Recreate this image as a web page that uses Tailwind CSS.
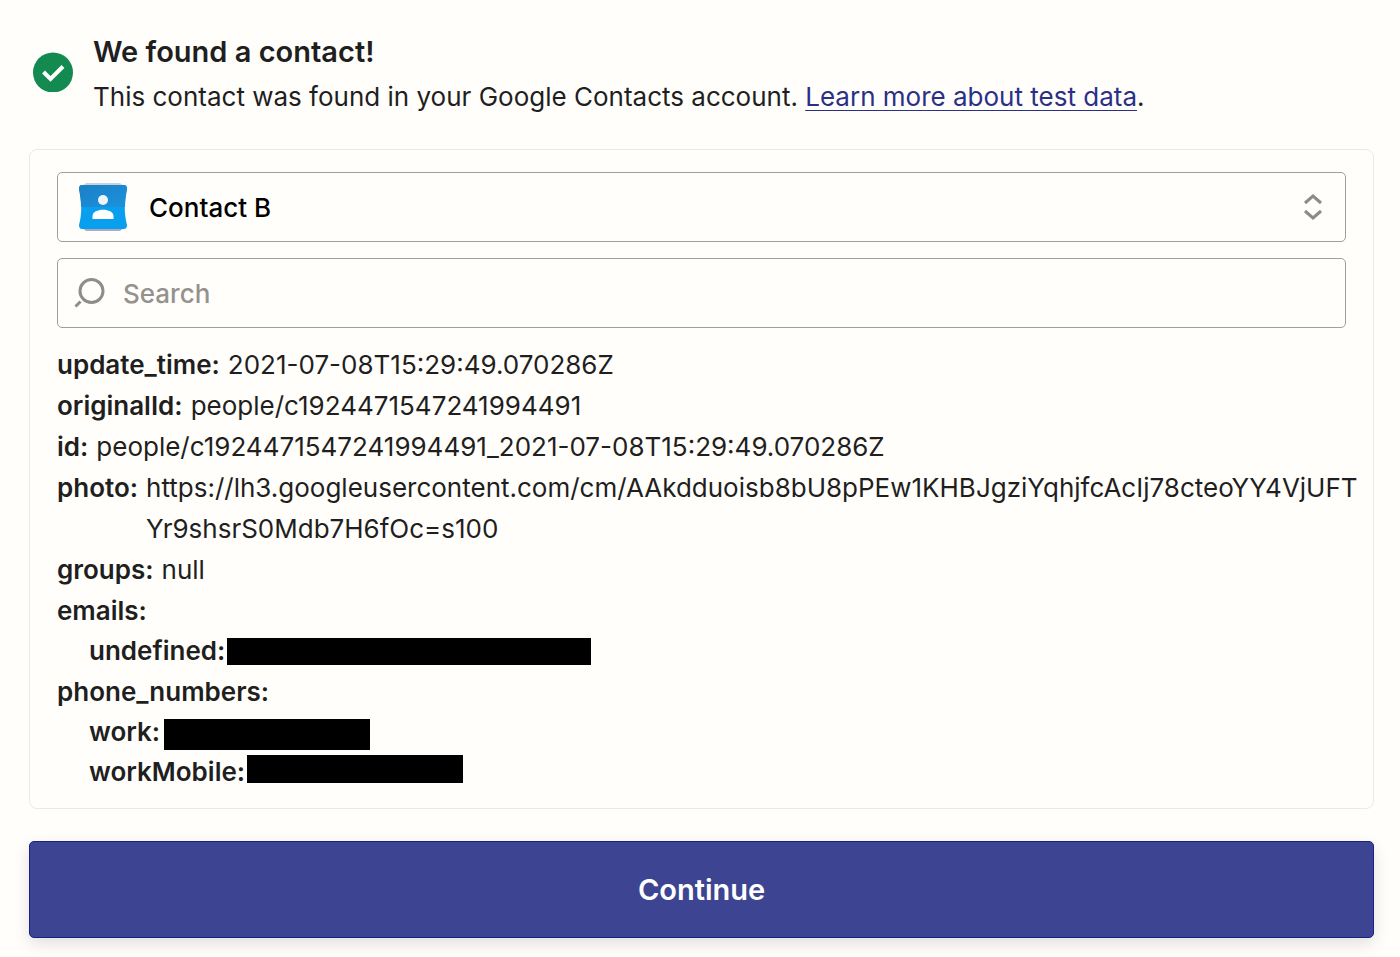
<!DOCTYPE html>
<html lang="en">
  <head>
    <meta charset="UTF-8" />
    <meta name="viewport" content="width=device-width, initial-scale=1.0" />
    <title>Test contact</title>
    <script src="https://cdn.jsdelivr.net/npm/@tailwindcss/browser@4"></script>
  </head>
  <body
    class="bg-[#fffefb] pt-8 pr-[26px] pb-[18px] pl-[29px] font-[Inter,sans-serif] text-[26px] leading-[41px] text-[#1f1f1f]"
  >
    <header class="flex items-start gap-5 pl-1">
      <svg class="mt-5 size-10 shrink-0" viewBox="0 0 40 40" fill="none">
        <circle cx="20" cy="20.500" r="20" fill="#138a50" />
        <path d="M10.500 20l7 7L30 14.500" stroke="#fff" stroke-width="4" />
      </svg>
      <div>
        <h1 class="text-[29px] leading-10 font-semibold">
          We found a contact!
        </h1>
        <p class="mt-1">
          This contact was found in your Google Contacts account.
          <a
            href="#"
            class="text-[#2b3087] underline decoration-1 underline-offset-4"
            >Learn more about test data</a
          >.
        </p>
      </div>
    </header>

    <main>
      <section
        class="mt-8 rounded-lg border border-[#eceae6] px-[27px] pt-[22px] pb-4"
      >
        <div class="relative">
          <select
            id="contact"
            aria-label="Contact"
            class="h-[70px] w-full appearance-none rounded-[5px] border border-[#a09f9b] bg-transparent pl-[91px] font-medium text-black"
          >
            <option>Contact B</option>
          </select>
          <svg
            class="pointer-events-none absolute top-[11px] left-[21px] size-[50px]"
            viewBox="0 0 50 50"
          >
            <defs>
              <linearGradient id="top" x1="0" y1="0" x2="1" y2="1">
                <stop offset="0" stop-color="#1a80c6" />
                <stop offset="1" stop-color="#1b92dc" />
              </linearGradient>
            </defs>
            <path d="M8 0h34l5 4H3z" fill="#c5d3df" />
            <path d="M3 44h44l-5 4H8z" fill="#a9adc4" />
            <path
              d="M4 2h42q3 0 3 4c-3 12-3 25 0 36q0 4-3 4H4q-3 0-3-4c3-11 3-24 0-36q0-4 3-4z"
              fill="#08a0ee"
            />
            <path
              d="M4 2h42q3 0 3 4c-1 6-2 12-2 18H3c0-6-1-12-2-18q0-4 3-4z"
              fill="url(#top)"
            />
            <circle cx="25" cy="17" r="5" fill="#eff4f8" />
            <path d="M14.500 36v-3c0-8.500 21-8.500 21 0v3z" fill="#fff" />
          </svg>
          <svg
            class="pointer-events-none absolute top-[21px] right-[23px] h-7 w-5"
            viewBox="0 0 20 28"
            fill="none"
            stroke="#8c8b88"
            stroke-width="3"
          >
            <path d="M2 10l8-7 8 7M2 18l8 7 8-7" />
          </svg>
        </div>

        <div class="relative mt-4">
          <input
            id="search"
            type="text"
            aria-label="Search"
            placeholder="Search"
            class="h-[70px] w-full rounded-[5px] border border-[#a09f9b] bg-transparent pl-[65px] font-medium placeholder:text-[#95928e]"
          />
          <svg
            class="pointer-events-none absolute top-[18px] left-[17px] size-8"
            viewBox="0 0 32 32"
            fill="none"
            stroke="#8f8d89"
            stroke-width="3"
          >
            <circle cx="17.500" cy="15" r="11.500" />
            <path d="M1.500 30.500l5-5" />
          </svg>
        </div>

        <dl class="mt-4">
          <div class="flex gap-2">
            <dt class="font-semibold">update_time:</dt>
            <dd>2021-07-08T15:29:49.070286Z</dd>
          </div>
          <div class="flex gap-2">
            <dt class="font-semibold">originalId:</dt>
            <dd>people/c1924471547241994491</dd>
          </div>
          <div class="flex gap-2">
            <dt class="font-semibold">id:</dt>
            <dd>people/c1924471547241994491_2021-07-08T15:29:49.070286Z</dd>
          </div>
          <div class="-mr-4 flex gap-2">
            <dt class="font-semibold">photo:</dt>
            <dd class="min-w-0 break-all">
              https://lh3.googleusercontent.com/cm/AAkdduoisb8bU8pPEw1KHBJgziYqhjfcAcIj78cteoYY4VjUFTYr9shsrS0Mdb7H6fOc=s100
            </dd>
          </div>
          <div class="flex gap-2">
            <dt class="font-semibold">groups:</dt>
            <dd>null</dd>
          </div>
          <div>
            <dt class="font-semibold">emails:</dt>
            <dd class="pl-8">
              <dl>
                <div class="flex gap-0.5">
                  <dt class="leading-10 font-semibold">undefined:</dt>
                  <dd class="mt-[7px] h-[27px] w-[364px] bg-black"></dd>
                </div>
              </dl>
            </dd>
          </div>
          <div>
            <dt class="font-semibold">phone_numbers:</dt>
            <dd class="pl-8">
              <dl>
                <div class="flex gap-1">
                  <dt class="leading-10 font-semibold">work:</dt>
                  <dd class="mt-[7px] h-[31px] w-[206px] bg-black"></dd>
                </div>
                <div class="flex gap-0.5">
                  <dt class="leading-10 font-semibold">workMobile:</dt>
                  <dd class="mt-[3px] h-7 w-[216px] bg-black"></dd>
                </div>
              </dl>
            </dd>
          </div>
        </dl>
      </section>

      <button
        type="button"
        class="mt-8 h-[97px] w-full rounded-[5px] border border-[#18208a] bg-[#3d4592] text-[29px] font-semibold text-white shadow-[0_6px_16px_rgba(0,0,0,0.12)]"
      >
        Continue
      </button>
    </main>
  </body>
</html>
